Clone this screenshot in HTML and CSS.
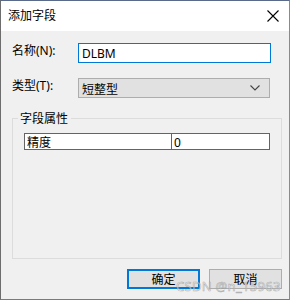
FILE: index.html
```html
<!DOCTYPE html>
<html>
<head>
<meta charset="utf-8">
<link rel="stylesheet" href="styles.css">
</head>
<body>
<div class="win">
  <div class="titlebar">
    <span class="title">添加字段</span>
    <svg class="close" width="12" height="12" viewBox="0 0 12 12"><path d="M0.5 0.5 L11.5 11.5 M11.5 0.5 L0.5 11.5" stroke="#000" stroke-width="1.1" fill="none"/></svg>
  </div>
  <div class="content">
    <div class="row row-name">
      <span class="label">名称<span class="lat">(N):</span></span>
      <div class="input"><span class="lat">DLBM</span></div>
    </div>
    <div class="row row-type">
      <span class="label">类型<span class="lat">(T):</span></span>
      <div class="combo">
        <span>短整型</span>
        <svg width="10" height="6" viewBox="0 0 10 6"><path d="M0.5 0.5 L5 5 L9.5 0.5" stroke="#444" stroke-width="1.1" fill="none"/></svg>
      </div>
    </div>
    <div class="group">
      <span class="legend">字段属性</span>
      <div class="table">
        <div class="cell c1">精度</div>
        <div class="cell c2"><span class="lat">0</span></div>
      </div>
    </div>
    <div class="buttons">
      <div class="btn primary">确定</div>
      <div class="btn">取消</div>
    </div>
  </div>
  <div class="watermark">CSDN @n_15963</div>
</div>
</body>
</html>
```
FILE: styles.css
```css
html, body { margin: 0; padding: 0; }
body {
  background: #ffffff;
  width: 293px;
  height: 303px;
  font-family: "Noto Sans CJK SC", "Noto Sans", sans-serif;
  font-size: 12px;
  color: #000;
}
.lat { font-family: "Noto Sans", "Liberation Sans", sans-serif; }
.win {
  position: relative;
  width: 288px;
  height: 298px;
  border-left: 1px solid #6d6d6d;
  border-right: 1px solid #8a8a8a;
  border-bottom: 1px solid #7a7a7a;
  border-top: 1px solid #5a6a8a;
  background: #f0f0f0;
  display: flex;
  flex-direction: column;
  overflow: hidden;
}
.titlebar {
  height: 30px;
  background: #ffffff;
  display: flex;
  align-items: center;
  justify-content: space-between;
  padding: 0 10px 0 7px;
  flex-shrink: 0;
}
.title { font-size: 12px; line-height: 16px; margin-top: -2px; }
.close { margin-top: 0; }
.content {
  flex: 1;
  padding: 0 0 0 11px;
  display: flex;
  flex-direction: column;
}
.row { display: flex; align-items: center; }
.label { width: 66px; line-height: 16px; }
.row-name { margin-top: 11px; height: 22px; }
.row-name .label { margin-top: -6px; }
.input {
  width: 188px;
  height: 18px;
  border: 1px solid #0078d7;
  background: #fff;
  padding: 0 0 0 3px;
  display: flex;
  align-items: center;
  font-size: 12px;
}
.row-type { margin-top: 14px; height: 20px; }
.row-type .label { margin-top: -6px; }
.combo {
  height: 18px;
  border: 1px solid #adadad;
  background: #e1e1e1;
  padding: 0 9px 0 3px;
  box-sizing: content-box;
  width: 178px;
  display: flex;
  align-items: center;
  justify-content: space-between;
}
.group {
  position: relative;
  margin-top: 20px;
  width: 268px;
  height: 139px;
  border: 1px solid #dcdcdc;
  box-sizing: content-box;
}
.legend {
  position: absolute;
  top: -9px;
  left: 5px;
  padding: 0 3px 0 2px;
  background: #f0f0f0;
  line-height: 16px;
}
.table {
  margin: 14px 0 0 11px;
  width: 244px;
  height: 15px;
  border: 1px solid #646464;
  background: #fff;
  display: flex;
}
.cell { height: 15px; line-height: 15px; padding-left: 2px; }
.c1 { width: 144px; border-right: 1px solid #646464; }
.c2 { flex: 1; }
.buttons {
  display: flex;
  margin-top: 10px;
  margin-left: 115px;
  gap: 9px;
}
.btn {
  width: 71px;
  height: 18px;
  border: 1px solid #adadad;
  background: #e1e1e1;
  display: flex;
  align-items: center;
  justify-content: center;
  line-height: 16px;
}
.btn.primary {
  width: 69px;
  height: 16px;
  border: 2px solid #0078d7;
}
.watermark {
  position: absolute;
  left: 175px;
  top: 277px;
  font-family: "Noto Sans", "Liberation Sans", sans-serif;
  font-size: 13px;
  line-height: 16px;
  color: rgba(255,255,255,0.6);
  -webkit-text-stroke: 0.6px rgba(110,110,110,0.5);
  letter-spacing: 0.3px;
}
```
